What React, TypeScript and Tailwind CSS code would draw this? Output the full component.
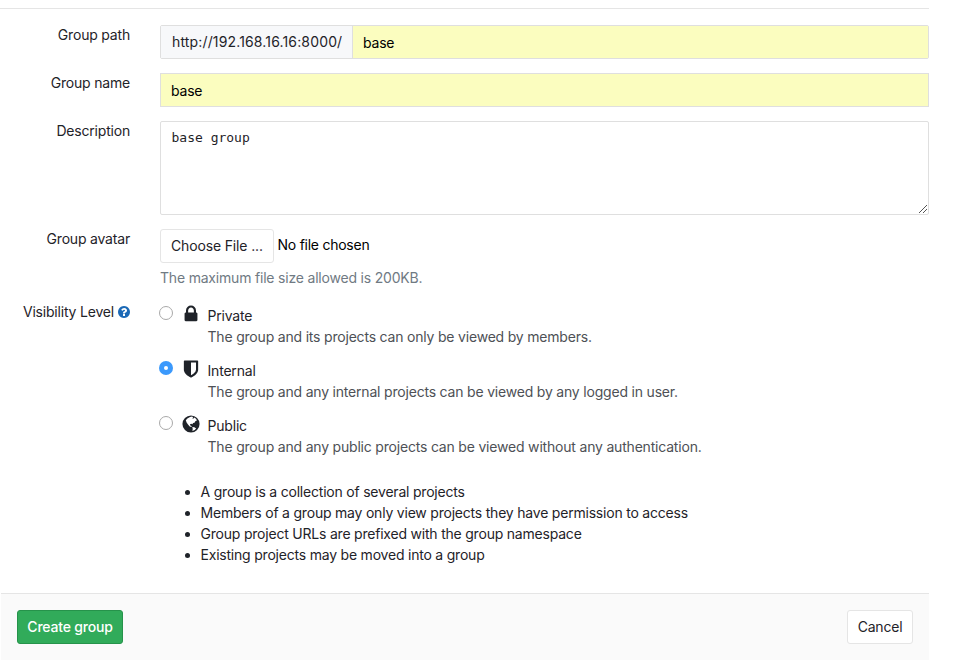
import type { ReactNode } from "react";

const LOCK =
  "M640 768h512v-192q0-106-75-181t-181-75-181 75-75 181v192zm832 96v576q0 40-28 68t-68 28h-960q-40 0-68-28t-28-68v-576q0-40 28-68t68-28h32v-192q0-184 132-316t316-132 316 132 132 316v192h32q40 0 68 28t28 68z";
const SHIELD =
  "M1344 960v-640h-448v1137q119-63 213-137 235-184 235-360zm192-768v768q0 86-33.5 170.5t-83 150-118 127.5-126.5 103-121 77.5-89.5 49.5-42.5 20q-12 6-26 6t-26-6q-16-7-42.5-20t-89.5-49.5-121-77.5-126.5-103-118-127.5-83-150-33.5-170.5v-768q0-26 19-45t45-19h1152q26 0 45 19t19 45z";
const QUESTION =
  "M1024 1376v-192q0-14-9-23t-23-9h-192q-14 0-23 9t-9 23v192q0 14 9 23t23 9h192q14 0 23-9t9-23zm256-672q0-88-55.5-163t-138.5-116-170-41q-243 0-371 213-15 24 8 42l132 100q7 6 19 6 16 0 25-12 53-68 86-92 34-24 86-24 48 0 85.5 26t37.5 59q0 38-20 61t-68 45q-63 28-115.5 86.5t-52.5 125.5v36q0 14 9 23t23 9h192q14 0 23-9t9-23q0-19 21.5-49.5t54.5-49.5q32-18 49-28.5t46-35 44.5-48 28-60.5 12.5-81zm384 192q0 209-103 385.5t-279.5 279.5-385.5 103-385.5-103-279.5-279.5-103-385.5 103-385.5 279.5-279.5 385.5-103 385.5 103 279.5 279.5 103 385.5z";

function Glyph({ d, className }: { d: string; className: string }) {
  return (
    <svg viewBox="0 0 1792 1792" className={className} fill="currentColor">
      <path d={d} />
    </svg>
  );
}

function Globe() {
  return (
    <svg viewBox="0 0 20 20" className="block size-5">
      <circle cx="10" cy="10" r="8.57" fill="#1f2329" />
      <path
        d="M9 3.1 11 2.6 12.2 3.3 11.2 4.4 12.6 4.6 13.5 3.5 15.2 4.9 15.9 6.6 14.3 7.3 13.5 8.7 12 9 11.5 10.3 10.2 9.7 9 10.3 9.3 11.6 10.8 12.2 10.4 13 8.7 12.5 7 10.6 5.6 8.6 4.8 6.3 6.4 4.4Z"
        fill="#fff"
      />
      <path d="M11.3 13 13.4 13.3 15.1 14.5 13.7 16.1 11.4 17.1 11.7 15Z" fill="#fff" />
    </svg>
  );
}

function Row({ label, className, children }: { label: ReactNode; className: string; children: ReactNode }) {
  return (
    <div className={`flex ${className}`}>
      <div className="-mt-px w-[130px] shrink-0 text-right">{label}</div>
      <div className="ml-[30px] w-[769px]">{children}</div>
    </div>
  );
}

function Radio({ checked }: { checked?: boolean }) {
  return checked ? (
    <span className="mt-[3px] flex size-[14px] items-center justify-center rounded-full bg-[#3b99fc]">
      <span className="size-1 rounded-full bg-white" />
    </span>
  ) : (
    <span className="mt-[3px] size-[14px] rounded-full border border-[#a9a9a9] bg-white" />
  );
}

function Option({ icon, title, text, checked }: { icon: ReactNode; title: string; text: string; checked?: boolean }) {
  return (
    <div className="-ml-px flex h-[55px]">
      <Radio checked={checked} />
      <div className="ml-[7.5px] w-5 pt-[0.75px]">{icon}</div>
      <div className="ml-[7px] pt-[2px]">
        <div className="leading-[21px]">{title}</div>
        <div className="leading-[21px] text-[#4e5156]">{text}</div>
      </div>
    </div>
  );
}

export default function App() {
  return (
    <div className="h-[670px] w-[971px] overflow-hidden bg-white font-['Inter',sans-serif] text-[14px] leading-[21px] tracking-[-0.195px] text-[#1f2329]">
      <div className="mt-2 h-px w-[929px] bg-[#e5e5e5]" />
      <Row label="Group path" className="mt-4 h-12">
        <div className="flex h-[34px] rounded-[2px] border border-[#dfdfdf]">
          <div className="w-[192px] border-r border-[#dfdfdf] bg-[#f7f8fa] pl-[11px] leading-[32px] tracking-[0.15px]">
            http://192.168.16.16:8000/
          </div>
          <div className="flex-1 bg-[#fbfdbf] pl-[10px] leading-[34px] text-black">base</div>
        </div>
      </Row>
      <Row label="Group name" className="h-12">
        <div className="h-[34px] border border-[#dfdfdf] bg-[#fbfdbf] pl-[10px] leading-[34px] text-black">base</div>
      </Row>
      <Row label="Description" className="h-[108px]">
        <div className="relative h-[94px] rounded-[2px] border border-[#dfdfdf] pt-[5px] pl-[10.5px] font-['DejaVu_Sans_Mono',monospace] text-[13px] leading-[21px] tracking-normal">
          base group
          <svg viewBox="0 0 8 8" className="absolute right-px bottom-px size-2" stroke="#555" shapeRendering="crispEdges">
            <path d="M0 8 8 0M4 8 8 4" />
          </svg>
        </div>
      </Row>
      <Row label="Group avatar" className="h-[73px]">
        <div className="flex">
          <div className="h-[34px] w-[114px] rounded-[3px] border border-[#e5e5e5] pl-[10px] leading-[32px] tracking-[-0.15px]">
            Choose File ...
          </div>
          <span className="ml-[3.5px] leading-[32px] tracking-[-0.25px] text-black">No file chosen</span>
        </div>
        <div className="mt-1 text-[#707a83]">The maximum file size allowed is 200KB.</div>
      </Row>
      <Row
        label={
          <span className="flex items-center justify-end gap-[3px]">
            Visibility Level
            <Glyph d={QUESTION} className="-mr-px size-[14px] text-[#1b69b6]" />
          </span>
        }
        className="h-[179px]"
      >
        <div className="pt-[1px]">
          <Option icon={<Glyph d={LOCK} className="block size-5" />} title="Private" text="The group and its projects can only be viewed by members." />
          <Option checked icon={<Glyph d={SHIELD} className="block size-5" />} title="Internal" text="The group and any internal projects can be viewed by any logged in user." />
          <Option icon={<Globe />} title="Public" text="The group and any public projects can be viewed without any authentication." />
        </div>
      </Row>
      <ul className="ml-[200.5px] h-28 list-disc tracking-[-0.21px]">
        <li>A group is a collection of several projects</li>
        <li>Members of a group may only view projects they have permission to access</li>
        <li>Group project URLs are prefixed with the group namespace</li>
        <li>Existing projects may be moved into a group</li>
      </ul>
      <div className="ml-px flex h-[67px] w-[928px] justify-between border-t border-[#e5e5e5] bg-[#fafafa] px-4 pt-4">
        <div className="h-[34px] w-[106px] rounded-[3px] border border-[#26934b] bg-[#31ab5a] text-center leading-[32px] font-medium text-white">
          Create group
        </div>
        <div className="h-[34px] w-[66px] rounded-[3px] border border-[#e5e5e5] bg-white text-center leading-[32px]">
          Cancel
        </div>
      </div>
    </div>
  );
}
